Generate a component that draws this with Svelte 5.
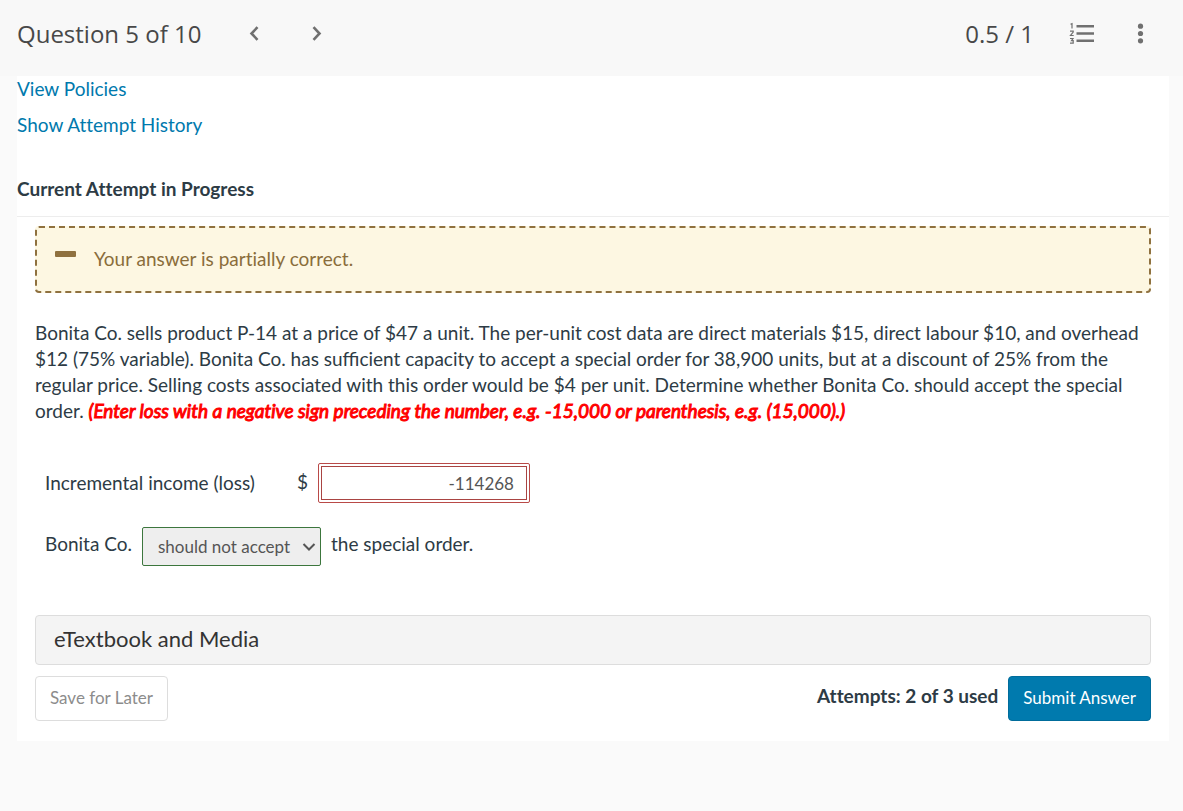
<script>
  let answer = "-114268";
  let decision = "should not accept";
</script>

<header class="question-header">
  <h1>Question 5 of 10</h1>
  <nav>
    <button class="icon-button" aria-label="Previous question">
      <svg width="24" height="24" viewBox="0 0 24 24">
        <path d="M15.500 5.200 9.500 11.500l6 6.300" />
      </svg>
    </button>
    <button class="icon-button" aria-label="Next question">
      <svg width="24" height="24" viewBox="0 0 24 24">
        <path d="M9.500 5.200 15.500 11.500l-6 6.300" />
      </svg>
    </button>
  </nav>
  <div class="score">0.5 / 1</div>
  <div class="tools">
    <button class="icon-button" aria-label="Question list">
      <svg width="26" height="24" viewBox="0 0 26 24">
        <path class="rule" d="M7.500 4.200H25M7.500 11.500H25M7.500 18.800H25" />
        <path
          class="digit"
          d="M1.500 2.300 3 1.700v4.800M1 9.200h3.200v.8L1.500 13.500h3.200M1 16.500h3l-1.500 2.200h1.700v2.500H1"
        />
      </svg>
    </button>
    <button class="icon-button" aria-label="More options">
      <svg width="24" height="24" viewBox="0 0 24 24">
        <circle cx="12.500" cy="4.200" r="2.600" />
        <circle cx="12.500" cy="11.500" r="2.600" />
        <circle cx="12.500" cy="18.800" r="2.600" />
      </svg>
    </button>
  </div>
</header>

<main>
  <div class="links">
    <a href="#policies">View Policies</a>
    <a href="#history">Show Attempt History</a>
  </div>
  <h2>Current Attempt in Progress</h2>

  <div class="question">
    <div class="alert">
      <span class="minus"></span>
      <span>Your answer is partially correct.</span>
    </div>

    <p>
      Bonita Co. sells product P-14 at a price of $47 a unit. The per-unit cost
      data are direct materials $15, direct labour $10, and overhead $12 (75%
      variable). Bonita Co. has sufficient capacity to accept a special order
      for 38,900 units, but at a discount of 25% from the regular price. Selling
      costs associated with this order would be $4 per unit. Determine whether
      Bonita Co. should accept the special order.
      <em
        >(Enter loss with a negative sign preceding the number, e.g. -15,000 or
        parenthesis, e.g. (15,000).)</em
      >
    </p>

    <div class="row income">
      <label for="income">Incremental income (loss)</label>
      <span class="currency">$</span>
      <span class="wrong">
        <input id="income" type="text" bind:value={answer} />
      </span>
    </div>

    <div class="row choice">
      <label for="decision">Bonita Co.</label>
      <span class="select-wrap">
        <select id="decision" bind:value={decision}>
          <option>should not accept</option>
          <option>should accept</option>
        </select>
        <svg width="14" height="10" viewBox="0 0 14 10">
          <path d="M1.500 2 7 7.500 12.500 2" />
        </svg>
      </span>
      <span>the special order.</span>
    </div>

    <button class="media">eTextbook and Media</button>

    <div class="actions">
      <button class="save">Save for Later</button>
      <strong>Attempts: 2 of 3 used</strong>
      <button class="submit">Submit Answer</button>
    </div>
  </div>
</main>

<style>
  :global(body) {
    margin: 0;
    background: #fafafa;
    color: #2d3b45;
    font: 19px/26px Lato, sans-serif;
    font-variant-ligatures: none;
  }

  button,
  input,
  select {
    box-sizing: border-box;
    font-family: inherit;
    font-variant-ligatures: none;
  }

  button {
    cursor: pointer;
  }

  .question-header {
    display: flex;
    align-items: center;
    height: 76px;
    box-sizing: border-box;
    padding: 0 31px 8px 17px;
    background: #f8f8f8;
    color: #484848;
    font-family: "Open Sans", sans-serif;
  }

  h1,
  .score {
    margin: 0;
    font-size: 24px;
    font-weight: 400;
    line-height: 36px;
  }

  nav {
    display: flex;
    gap: 38px;
    margin-left: 41px;
  }

  .score {
    margin-left: auto;
  }

  .tools {
    display: flex;
    gap: 33px;
    margin-left: 35px;
  }

  .icon-button {
    display: flex;
    padding: 0;
    border: none;
    background: none;
  }

  .icon-button svg {
    fill: #707070;
  }

  .icon-button path {
    fill: none;
    stroke: #707070;
    stroke-width: 2.6;
  }

  .icon-button .digit {
    stroke-width: 1.2;
  }

  main {
    margin: 0 14px 0 17px;
    padding-bottom: 20px;
    background: #fff;
  }

  .links {
    display: flex;
    flex-direction: column;
    align-items: flex-start;
    gap: 10px;
  }

  a {
    color: #0079ad;
    text-decoration: none;
  }

  h2 {
    margin: 0;
    padding: 38px 0 14px;
    border-bottom: 1px solid #ededed;
    font-size: 19px;
    font-weight: 700;
    line-height: 26px;
  }

  .question {
    padding: 9px 18px 0;
  }

  .alert {
    display: flex;
    gap: 18px;
    padding: 18px 18px 19px;
    border: 2px dashed #8f713f;
    border-radius: 4px;
    background: #fdf7e2;
    color: #8a6d3b;
  }

  .minus {
    width: 21px;
    height: 6px;
    margin-top: 5px;
    border-radius: 1px;
    background: #8f713f;
  }

  p {
    margin: 27px 0 39px;
    font-variant-ligatures: normal;
  }

  em {
    color: #f00;
    font-variant-ligatures: none;
    -webkit-text-stroke: 1px #f00;
  }

  .row {
    display: flex;
    align-items: center;
    gap: 10px;
    padding-left: 10px;
  }

  .income {
    margin-bottom: 24px;
  }

  .choice > label,
  .choice > span:last-child {
    padding-bottom: 5px;
  }

  .currency {
    margin-left: 32px;
    padding-bottom: 3px;
  }

  .wrong {
    display: flex;
    padding: 2px;
    border: 1px solid #b94a48;
    border-radius: 2px;
  }

  input {
    width: 206px;
    height: 34px;
    padding: 0 12px;
    border: 1px solid #a94442;
    background: #fff;
    color: #555;
    font-size: 17px;
    text-align: right;
  }

  .select-wrap {
    position: relative;
  }

  select {
    display: block;
    width: 179px;
    height: 39px;
    padding: 0 15px;
    border: 1px solid #3c763d;
    border-radius: 2px;
    background: #eee;
    color: #555;
    font-size: 17px;
    appearance: none;
  }

  .select-wrap svg {
    position: absolute;
    top: 15px;
    right: 5px;
    fill: none;
    stroke: #555;
    stroke-width: 2;
    pointer-events: none;
  }

  .media {
    width: 100%;
    height: 50px;
    margin: 49px 0 11px;
    padding: 0 18px 4px;
    border: 1px solid #ddd;
    border-radius: 4px;
    background: #f4f4f4;
    color: #333;
    font-size: 22px;
    text-align: left;
  }

  .actions {
    display: flex;
    align-items: center;
    gap: 10px;
  }

  .actions strong {
    margin-left: auto;
    padding-bottom: 5px;
  }

  .save,
  .submit {
    height: 45px;
    padding: 0 14px 2px;
    border: 1px solid #ddd;
    border-radius: 4px;
    background: #fff;
    color: #8c8c8c;
    font-size: 17px;
  }

  .submit {
    border-color: #006c9b;
    background: #007aae;
    color: #fff;
  }
</style>
